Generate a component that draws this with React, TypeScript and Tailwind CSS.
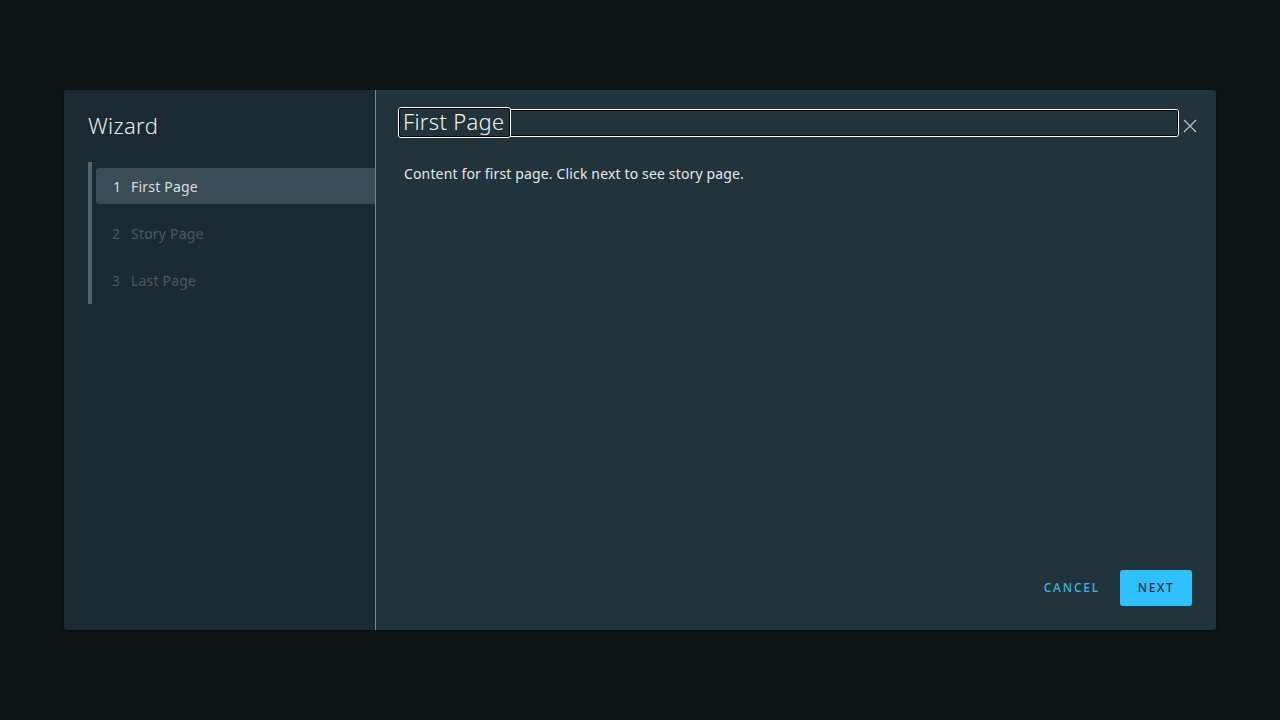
import React from "react";

export default function App() {
  const font = { fontFamily: '"Noto Sans", "Open Sans", sans-serif' };
  return (
    <div className="w-[1280px] h-[720px] bg-[#0d1519] flex items-start justify-center pt-[90px]" style={font}>
      <div className="w-[1152px] h-[540px] flex rounded-[3px] overflow-hidden shadow-[0_1px_3px_rgba(0,0,0,0.5)]">
        {/* Left nav */}
        <div className="w-[312px] bg-[#1b2a32] border-r border-[#7b868b] flex flex-col pl-6">
          <div className="pt-[21px] h-[72px] text-[22px] font-light text-[#e8ebec] leading-[28px] tracking-[0.3px]">Wizard</div>
          <div className="border-l-4 border-[#56656c] py-[6px] flex flex-col gap-[11px]">
            <div className="ml-1 h-9 rounded-l-[3px] bg-[#3a4c55] flex items-center text-[14px] text-[#d9dde0] tracking-[0.2px]">
              <span className="w-[35px] pl-[17px]">1</span>
              <span>First Page</span>
            </div>
            <div className="ml-1 h-9 flex items-center text-[14px] text-[#4a5a62] tracking-[0.2px]">
              <span className="w-[35px] pl-[16px]">2</span>
              <span>Story Page</span>
            </div>
            <div className="ml-1 h-9 flex items-center text-[14px] text-[#4a5a62] tracking-[0.2px]">
              <span className="w-[35px] pl-[16px]">3</span>
              <span>Last Page</span>
            </div>
          </div>
        </div>
        {/* Right content */}
        <div className="flex-1 bg-[#21333b] flex flex-col pl-[22px] pr-[18px]">
          <div className="flex items-start pt-[19px]">
            <div className="relative flex-1 h-[28px] rounded-[3px] border border-white">
              <div className="absolute inset-0 rounded-[2px] border border-black"></div>
              <div className="absolute left-[-1px] top-[-3px] h-[31px] w-[113px] rounded-[3px] border border-white bg-[#21333b]">
                <div className="absolute inset-0 rounded-[2px] border border-black"></div>
              </div>
              <span className="absolute left-[4px] top-[-3px] text-[22px] font-light text-[#f2f4f5] leading-[28px] tracking-[0.3px]">First Page</span>
            </div>
            <button className="w-[16px] h-[16px] mt-[9px] ml-[3px] flex items-center justify-center">
              <svg width="14" height="14" viewBox="0 0 14 14" fill="none" stroke="#b8c2c7" strokeWidth="1.2">
                <path d="M1 1 L13 13 M13 1 L1 13" />
              </svg>
            </button>
          </div>
          <p className="mt-[27px] pl-[6px] text-[14px] text-[#e6e9eb] leading-5 tracking-[0.15px]">Content for first page. Click next to see story page.</p>
          <div className="flex-1"></div>
          <div className="flex justify-end items-center gap-[20px] pb-[24px] pr-[6px]">
            <button className="h-9 px-0 text-[12px] font-medium tracking-[1.8px] text-[#3fb4e6]">CANCEL</button>
            <button className="h-9 w-[72px] rounded-[3px] bg-[#30c0ff] text-[12px] font-medium tracking-[1.6px] text-[#1f2e35]">NEXT</button>
          </div>
        </div>
      </div>
    </div>
  );
}
